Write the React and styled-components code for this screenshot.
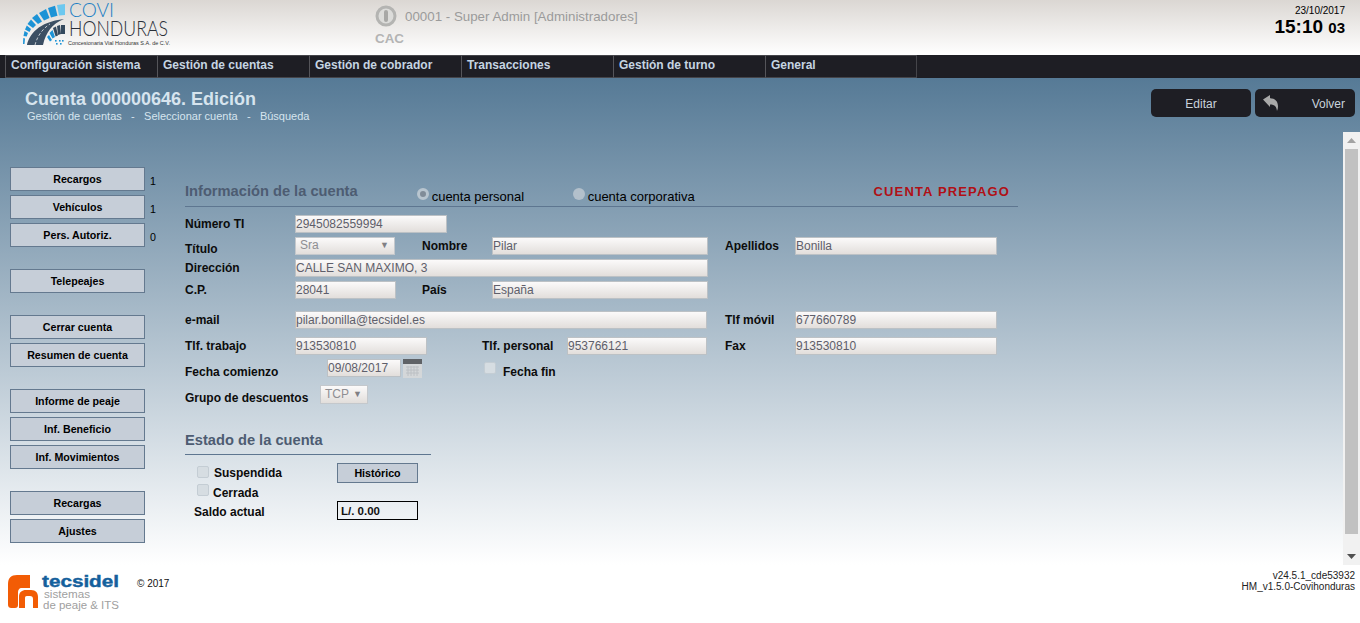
import React from 'react';
import styled, { createGlobalStyle } from 'styled-components';

const GlobalStyle = createGlobalStyle`
  html, body {
    margin: 0;
    padding: 0;
    height: 623px;
    overflow: hidden;
    background: #fff;
    font-family: "Liberation Sans", Arial, sans-serif;
  }
`;

const Page = styled.div`
  width: 1360px;
  height: 623px;
  display: flex;
  flex-direction: column;
`;

const Header = styled.header`
  height: 55px;
  flex: none;
  display: flex;
  background: linear-gradient(#dbd7d3, #ffffff);
`;

const LogoBox = styled.div`
  width: 375px;
  flex: none;
`;

const UserBox = styled.div`
  flex: 1;
  padding-top: 5px;
`;

const UserLine = styled.div`
  display: flex;
  align-items: center;
  gap: 8px;
  height: 22px;
  font-size: 13.33px;
  color: #9b9b9b;
`;

const Station = styled.div`
  margin-top: 4px;
  font-size: 13.33px;
  font-weight: bold;
  color: #b4b4b4;
`;

const ClockBox = styled.div`
  width: 200px;
  padding: 6px 15px 0 0;
  box-sizing: border-box;
  text-align: right;
  color: #000;
`;

const DateText = styled.div`
  font-size: 10px;
  line-height: 10px;
`;

const Time = styled.div`
  font-size: 19px;
  font-weight: bold;
  line-height: 20px;
  margin-top: 1px;
`;

const Seconds = styled.span`
  font-size: 15px;
`;

const MenuBar = styled.nav`
  height: 23px;
  flex: none;
  display: flex;
  padding-left: 5px;
  background: #1e1e24;
`;

const MenuItem = styled.div`
  width: 152px;
  box-sizing: border-box;
  padding: 2px 0 0 5px;
  border-left: 1px solid #55555a;
  border-top: 1px solid #45454a;
  border-bottom: 1px solid #45454a;
  font-size: 12px;
  font-weight: bold;
  color: #c6d5e2;
  &:last-child {
    border-right: 1px solid #45454a;
  }
`;

const Main = styled.main`
  height: 487px;
  flex: none;
  display: flex;
  flex-direction: column;
  background: linear-gradient(#567a96, #ffffff);
`;

const TitleBar = styled.div`
  height: 54px;
  flex: none;
  display: flex;
  justify-content: space-between;
  padding: 11px 5px 0 25px;
  box-sizing: border-box;
`;

const Title = styled.h1`
  margin: 0;
  font-size: 18px;
  line-height: 20px;
  font-weight: bold;
  color: #d6e4ee;
`;

const Crumbs = styled.div`
  display: flex;
  gap: 9.3px;
  margin: 1px 0 0 2px;
  font-size: 11px;
  line-height: 12px;
  color: #d6e4ee;
`;

const ActionRow = styled.div`
  display: flex;
  gap: 4px;
`;

const ActionButton = styled.div`
  position: relative;
  width: 100px;
  height: 28px;
  box-sizing: border-box;
  border-radius: 5px;
  background: #1e1e24;
  color: #c9d3dc;
  font-size: 12px;
  line-height: 30px;
  text-align: ${({ $right }) => ($right ? 'right' : 'center')};
  padding-right: ${({ $right }) => ($right ? '10px' : '0')};
`;

const BackIcon = styled.svg`
  position: absolute;
  left: 7px;
  top: 5px;
`;

const Content = styled.div`
  flex: 1;
  display: flex;
  min-height: 0;
`;

const SideBar = styled.aside`
  width: 185px;
  flex: none;
  padding: 35px 0 0 10px;
  box-sizing: border-box;
`;

const SideGroup = styled.div`
  display: flex;
  flex-direction: column;
  gap: 4px;
  margin-bottom: 22px;
`;

const SideRow = styled.div`
  display: flex;
`;

const GreyButton = styled.div`
  width: ${({ $w }) => $w}px;
  height: ${({ $h }) => $h}px;
  box-sizing: border-box;
  flex: none;
  border: 1px solid #64798f;
  background: #c6ced8;
  color: #000;
  font-size: 10.67px;
  font-weight: bold;
  line-height: ${({ $h }) => $h - 2}px;
  text-align: center;
`;

const Count = styled.span`
  margin: 8px 0 0 5px;
  font-size: 10.67px;
  color: #000;
`;

const Form = styled.section`
  flex: 1;
  padding-top: 50px;
`;

const SectionHead = styled.div`
  width: ${({ $w }) => $w}px;
  height: ${({ $h }) => $h}px;
  margin-top: ${({ $top }) => $top || 0}px;
  box-sizing: border-box;
  border-bottom: 1px solid #5e7690;
  display: flex;
`;

const SectionTitle = styled.h2`
  margin: 0;
  padding-top: 1px;
  font-size: 14.67px;
  line-height: 17px;
  font-weight: bold;
  color: #4d5c72;
`;

const RadioGroup = styled.div`
  display: flex;
  margin-left: 59px;
`;

const RadioOption = styled.label`
  display: flex;
  width: ${({ $w }) => $w}px;
  font-size: 13px;
  line-height: 14px;
  padding-top: 8px;
  color: #000;
`;

const RadioDot = styled.span`
  width: 12px;
  height: 12px;
  margin: -2px 3px 0 0;
  flex: none;
  box-sizing: border-box;
  border-radius: 50%;
  background: ${({ $on }) => ($on ? '#808c98' : '#b3c0cb')};
  border: ${({ $on }) => ($on ? '3px solid #b8c5cf' : '0')};
`;

const PrepaidTag = styled.div`
  margin-left: auto;
  padding: 2px 8px 0 0;
  font-size: 13px;
  font-weight: bold;
  letter-spacing: 1.15px;
  color: #b01016;
`;

const Row = styled.div`
  display: flex;
  height: ${({ $h }) => $h || 18}px;
  margin-top: ${({ $top }) => $top}px;
  padding-left: ${({ $left }) => $left || 0}px;
`;

const FieldLabel = styled.span`
  width: ${({ $w }) => $w}px;
  flex: none;
  padding-top: ${({ $down }) => $down || 0}px;
  margin-left: ${({ $gap }) => $gap || 0}px;
  font-size: 12px;
  line-height: 14px;
  font-weight: bold;
  color: #0c0c0c;
`;

const TextBox = styled.div`
  width: ${({ $w }) => $w}px;
  height: 18px;
  flex: none;
  box-sizing: border-box;
  border: 1px solid #bcc1c5;
  background: linear-gradient(#fbfafa, #e2dedb);
  padding-left: 0;
  font-size: 12px;
  line-height: 16px;
  color: #5e5e6a;
`;

const SelectBox = styled(TextBox)`
  display: flex;
  justify-content: space-between;
  padding: 0 5px 0 4px;
  color: #8e8e92;
  height: ${({ $h }) => $h || 18}px;
  line-height: ${({ $h }) => ($h || 18) - 3}px;
  border-color: #c4c8cc;
`;

const Caret = styled.span`
  font-size: 9px;
  color: #808084;
`;

const CheckBox = styled.span`
  display: block;
  width: 12px;
  height: 12px;
  flex: none;
  box-sizing: border-box;
  margin: ${({ $m }) => $m};
  border: 1px solid #c4cdd4;
  border-radius: 2px;
  background: #d6dde2;
`;

const CheckLabel = styled.span`
  font-size: 12px;
  line-height: 14px;
  font-weight: bold;
  color: #0c0c0c;
  padding-top: ${({ $down }) => $down || 0}px;
  width: ${({ $w }) => $w}px;
  flex: none;
`;

const CalendarIcon = styled.svg`
  margin-left: 2px;
  flex: none;
`;

const Balance = styled.div`
  width: 81px;
  height: 19px;
  box-sizing: border-box;
  flex: none;
  border: 1px solid #000;
  padding-left: 3px;
  font-size: 11.5px;
  font-weight: bold;
  line-height: 18px;
  color: #111;
`;

const ScrollTrack = styled.div`
  width: 17px;
  flex: none;
  height: 433px;
  display: flex;
  flex-direction: column;
  background: #f1f1f1;
`;

const ScrollArrow = styled.div`
  height: 17px;
  flex: none;
  display: flex;
  align-items: center;
  justify-content: center;
`;

const ScrollThumb = styled.div`
  height: 385px;
  flex: none;
  margin: 0 2px;
  background: #c1c1c1;
`;

const ScrollRest = styled.div`
  flex: 1;
`;

const Footer = styled.footer`
  flex: 1;
  display: flex;
  justify-content: space-between;
  background: #fff;
`;

const FooterLeft = styled.div`
  display: flex;
  padding: 8px 0 0 8px;
`;

const Copyright = styled.span`
  margin: 5px 0 0 11px;
  font-size: 10px;
  color: #111;
`;

const Version = styled.div`
  padding: 5px 5px 0 0;
  text-align: right;
  font-size: 10px;
  line-height: 11px;
  color: #222;
`;

const menuItems = [
  'Configuración sistema',
  'Gestión de cuentas',
  'Gestión de cobrador',
  'Transacciones',
  'Gestión de turno',
  'General',
];

const sideGroups = [
  [
    { text: 'Recargos', count: 1 },
    { text: 'Vehículos', count: 1 },
    { text: 'Pers. Autoriz.', count: 0 },
  ],
  [{ text: 'Telepeajes' }],
  [{ text: 'Cerrar cuenta' }, { text: 'Resumen de cuenta' }],
  [{ text: 'Informe de peaje' }, { text: 'Inf. Beneficio' }, { text: 'Inf. Movimientos' }],
  [{ text: 'Recargas' }, { text: 'Ajustes' }],
];

const outerBlocks = [
  'M48 8L55 5.7 57.5 15.8 51 17.5z',
  'M39 13L46 9 49.5 18 44 20.5z',
  'M32 18L37 14 42 21.5 38 24z',
  'M27.5 24L31 19.5 36 25 33 28z',
  'M25 29.5L26.8 25.5 31 29 29.5 32z',
  'M23.5 36L24.5 31 28 33 26.7 36.5z',
  'M23 44L23.3 38 25 38.5 24.5 44z',
];

const innerDark = ['M61 25h4v9h-4z', 'M57 26l3-1 1 9-3 1z', 'M53 28l3-1.6 2 9-2.4 1z'];
const innerBlue = ['M49.5 33l3-3 2.5 7-2.5 1.5z', 'M47 37l2-2 3 5-2 1.5z'];
const dots = [[55, 40], [59, 40], [62, 40], [56, 43], [60, 43]];

const CoviLogo = () => (
  <svg width="300" height="52" viewBox="0 0 300 52" style={{ display: 'block' }}>
    <path d="M57 5L65 4V15L59 15.5z" fill="#6cc8ef" />
    {outerBlocks.map((d) => (
      <path key={d} d={d} fill="#1c93d6" />
    ))}
    <path d="M27 45C29 35 38 22 64 19 52 24 46 32 43 45z" fill="#3c4f63" />
    <path d="M35 45C37 37 42 29 50 24" stroke="#fff" strokeWidth="0.7" strokeDasharray="3 2" fill="none" />
    {innerDark.map((d) => (
      <path key={d} d={d} fill="#34495e" />
    ))}
    {innerBlue.map((d) => (
      <path key={d} d={d} fill="#1c93d6" />
    ))}
    {dots.map(([x, y]) => (
      <rect key={`${x}-${y}`} x={x} y={y} width="1.6" height="1.6" fill="#1c93d6" />
    ))}
    <text x="69" y="17" fontFamily="Lato, 'Liberation Sans', sans-serif" fontWeight="300" fontSize="20" fill="#1d7fc4" textLength="45" lengthAdjust="spacingAndGlyphs">COVI</text>
    <text x="69" y="36" fontFamily="Lato, 'Liberation Sans', sans-serif" fontWeight="300" fontSize="22" fill="#2a2f38" textLength="99" lengthAdjust="spacingAndGlyphs">HONDURAS</text>
    <text x="68" y="45" fontFamily="Liberation Sans" fontSize="4.6" fill="#333" textLength="102" lengthAdjust="spacingAndGlyphs">Concesionaria Vial Honduras S.A. de C.V.</text>
  </svg>
);

const TecsidelLogo = () => (
  <svg width="118" height="40" viewBox="0 0 118 40" style={{ display: 'block' }}>
    <path d="M0 31V11C0 5 3 2 9 2H22V15H14C11 15 10 17 10 20V32C10 34 9 35 7 35H4C1 35 0 34 0 31z" fill="#f25c05" />
    <path d="M11 35V24C11 19 14 17 18 17H23C28 17 30 20 30 24V35H25V26C25 24 24 23 22 23H19C17 23 17 24 17 26V35z" fill="#f25c05" />
    <text x="34" y="14" fontFamily="Liberation Sans" fontWeight="bold" fontSize="16" fill="#14609c" stroke="#14609c" strokeWidth="0.4" textLength="77" lengthAdjust="spacingAndGlyphs">tecsidel</text>
    <text x="36" y="25" fontFamily="Liberation Sans" fontSize="11" fill="#a0a0a0" textLength="46" lengthAdjust="spacingAndGlyphs">sistemas</text>
    <text x="35" y="36" fontFamily="Liberation Sans" fontSize="11" fill="#a0a0a0" textLength="76" lengthAdjust="spacingAndGlyphs">de peaje &amp; ITS</text>
  </svg>
);

const PowerIcon = () => (
  <svg width="22" height="22" viewBox="0 0 22 22">
    <circle cx="11" cy="11" r="9" fill="#dcdcda" stroke="#b4b4b2" strokeWidth="3" />
    <rect x="9" y="5" width="4" height="12" rx="2" fill="#a8a8a6" />
  </svg>
);

const BackArrow = () => (
  <BackIcon width="18" height="18" viewBox="0 0 18 18">
    <path d="M1 5.5L8 1v3.2c5 0 8 3 8 8.3 0 1.5-.3 3-1 4.5-.3-4-2-6.6-7-6.6V13z" fill="#a9a9a9" />
  </BackIcon>
);

const Calendar = () => (
  <CalendarIcon width="19" height="19" viewBox="0 0 19 19">
    <rect x="0" y="0" width="19" height="5" fill="#5f6266" />
    <rect x="0" y="5" width="19" height="14" fill="#d4d7d9" />
    <path d="M3 8h13M3 11h13M3 14h13M5 7v10M8 7v10M11 7v10M14 7v10" stroke="#bcc0c4" strokeWidth="1" />
  </CalendarIcon>
);

const App = () => (
  <Page>
    <GlobalStyle />
    <Header>
      <LogoBox>
        <CoviLogo />
      </LogoBox>
      <UserBox>
        <UserLine>
          <PowerIcon />
          <span>00001 - Super Admin [Administradores]</span>
        </UserLine>
        <Station>CAC</Station>
      </UserBox>
      <ClockBox>
        <DateText>23/10/2017</DateText>
        <Time>
          15:10 <Seconds>03</Seconds>
        </Time>
      </ClockBox>
    </Header>
    <MenuBar>
      {menuItems.map((item) => (
        <MenuItem key={item}>{item}</MenuItem>
      ))}
    </MenuBar>
    <Main>
      <TitleBar>
        <div>
          <Title>Cuenta 000000646. Edición</Title>
          <Crumbs>
            <span>Gestión de cuentas</span>
            <span>-</span>
            <span>Seleccionar cuenta</span>
            <span>-</span>
            <span>Búsqueda</span>
          </Crumbs>
        </div>
        <ActionRow>
          <ActionButton>Editar</ActionButton>
          <ActionButton $right>
            <BackArrow />
            Volver
          </ActionButton>
        </ActionRow>
      </TitleBar>
      <Content>
        <SideBar>
          {sideGroups.map((group) => (
            <SideGroup key={group[0].text}>
              {group.map((btn) => (
                <SideRow key={btn.text}>
                  <GreyButton $w={135} $h={24}>{btn.text}</GreyButton>
                  {btn.count !== undefined && <Count>{btn.count}</Count>}
                </SideRow>
              ))}
            </SideGroup>
          ))}
        </SideBar>
        <Form>
          <SectionHead $w={833} $h={25}>
            <SectionTitle>Información de la cuenta</SectionTitle>
            <RadioGroup>
              <RadioOption $w={156}>
                <RadioDot $on />
                cuenta personal
              </RadioOption>
              <RadioOption $w={130}>
                <RadioDot />
                cuenta corporativa
              </RadioOption>
            </RadioGroup>
            <PrepaidTag>CUENTA PREPAGO</PrepaidTag>
          </SectionHead>

          <Row $top={8}>
            <FieldLabel $w={110} $down={2}>Número TI</FieldLabel>
            <TextBox $w={152}>2945082559994</TextBox>
          </Row>
          <Row $top={4}>
            <FieldLabel $w={110} $down={5}>Título</FieldLabel>
            <SelectBox $w={100}>Sra<Caret>▼</Caret></SelectBox>
            <FieldLabel $w={70} $gap={27} $down={2}>Nombre</FieldLabel>
            <TextBox $w={216}>Pilar</TextBox>
            <FieldLabel $w={70} $gap={17} $down={2}>Apellidos</FieldLabel>
            <TextBox $w={202}>Bonilla</TextBox>
          </Row>
          <Row $top={4}>
            <FieldLabel $w={110} $down={2}>Dirección</FieldLabel>
            <TextBox $w={413}>CALLE SAN MAXIMO, 3</TextBox>
          </Row>
          <Row $top={4}>
            <FieldLabel $w={110} $down={2}>C.P.</FieldLabel>
            <TextBox $w={101}>28041</TextBox>
            <FieldLabel $w={70} $gap={26} $down={2}>País</FieldLabel>
            <TextBox $w={216}>España</TextBox>
          </Row>
          <Row $top={12}>
            <FieldLabel $w={110} $down={2}>e-mail</FieldLabel>
            <TextBox $w={412}>pilar.bonilla@tecsidel.es</TextBox>
            <FieldLabel $w={70} $gap={18} $down={2}>Tlf móvil</FieldLabel>
            <TextBox $w={202}>677660789</TextBox>
          </Row>
          <Row $top={8}>
            <FieldLabel $w={110} $down={2}>Tlf. trabajo</FieldLabel>
            <TextBox $w={132}>913530810</TextBox>
            <FieldLabel $w={85} $gap={55} $down={2}>Tlf. personal</FieldLabel>
            <TextBox $w={140}>953766121</TextBox>
            <FieldLabel $w={70} $gap={18} $down={2}>Fax</FieldLabel>
            <TextBox $w={202}>913530810</TextBox>
          </Row>
          <Row $top={4}>
            <FieldLabel $w={142} $down={6}>Fecha comienzo</FieldLabel>
            <TextBox $w={74}>09/08/2017</TextBox>
            <Calendar />
            <CheckBox $m="3px 7px 0 62px" />
            <CheckLabel $down={6}>Fecha fin</CheckLabel>
          </Row>
          <Row $top={8} $h={19}>
            <FieldLabel $w={135} $down={6}>Grupo de descuentos</FieldLabel>
            <SelectBox $w={48} $h={19}>TCP<Caret>▼</Caret></SelectBox>
          </Row>

          <SectionHead $w={246} $h={24} $top={27}>
            <SectionTitle>Estado de la cuenta</SectionTitle>
          </SectionHead>

          <Row $top={8} $h={20} $left={12}>
            <CheckBox $m="3px 5px 0 0" />
            <CheckLabel $w={123} $down={3}>Suspendida</CheckLabel>
            <GreyButton $w={81} $h={20}>Histórico</GreyButton>
          </Row>
          <Row $top={1} $h={17} $left={12}>
            <CheckBox $m="0 4px 0 0" />
            <CheckLabel $down={2}>Cerrada</CheckLabel>
          </Row>
          <Row $top={0} $h={19} $left={9}>
            <FieldLabel $w={143} $down={4}>Saldo actual</FieldLabel>
            <Balance>L/. 0.00</Balance>
          </Row>
        </Form>
        <ScrollTrack>
          <ScrollArrow>
            <svg width="9" height="5" viewBox="0 0 9 5"><path d="M4.5 0L9 5H0z" fill="#a3a3a3" /></svg>
          </ScrollArrow>
          <ScrollThumb />
          <ScrollRest />
          <ScrollArrow>
            <svg width="9" height="5" viewBox="0 0 9 5"><path d="M0 0h9L4.5 5z" fill="#505050" /></svg>
          </ScrollArrow>
        </ScrollTrack>
      </Content>
    </Main>
    <Footer>
      <FooterLeft>
        <TecsidelLogo />
        <Copyright>© 2017</Copyright>
      </FooterLeft>
      <Version>
        v24.5.1_cde53932
        <br />
        HM_v1.5.0-Covihonduras
      </Version>
    </Footer>
  </Page>
);

export default App;
